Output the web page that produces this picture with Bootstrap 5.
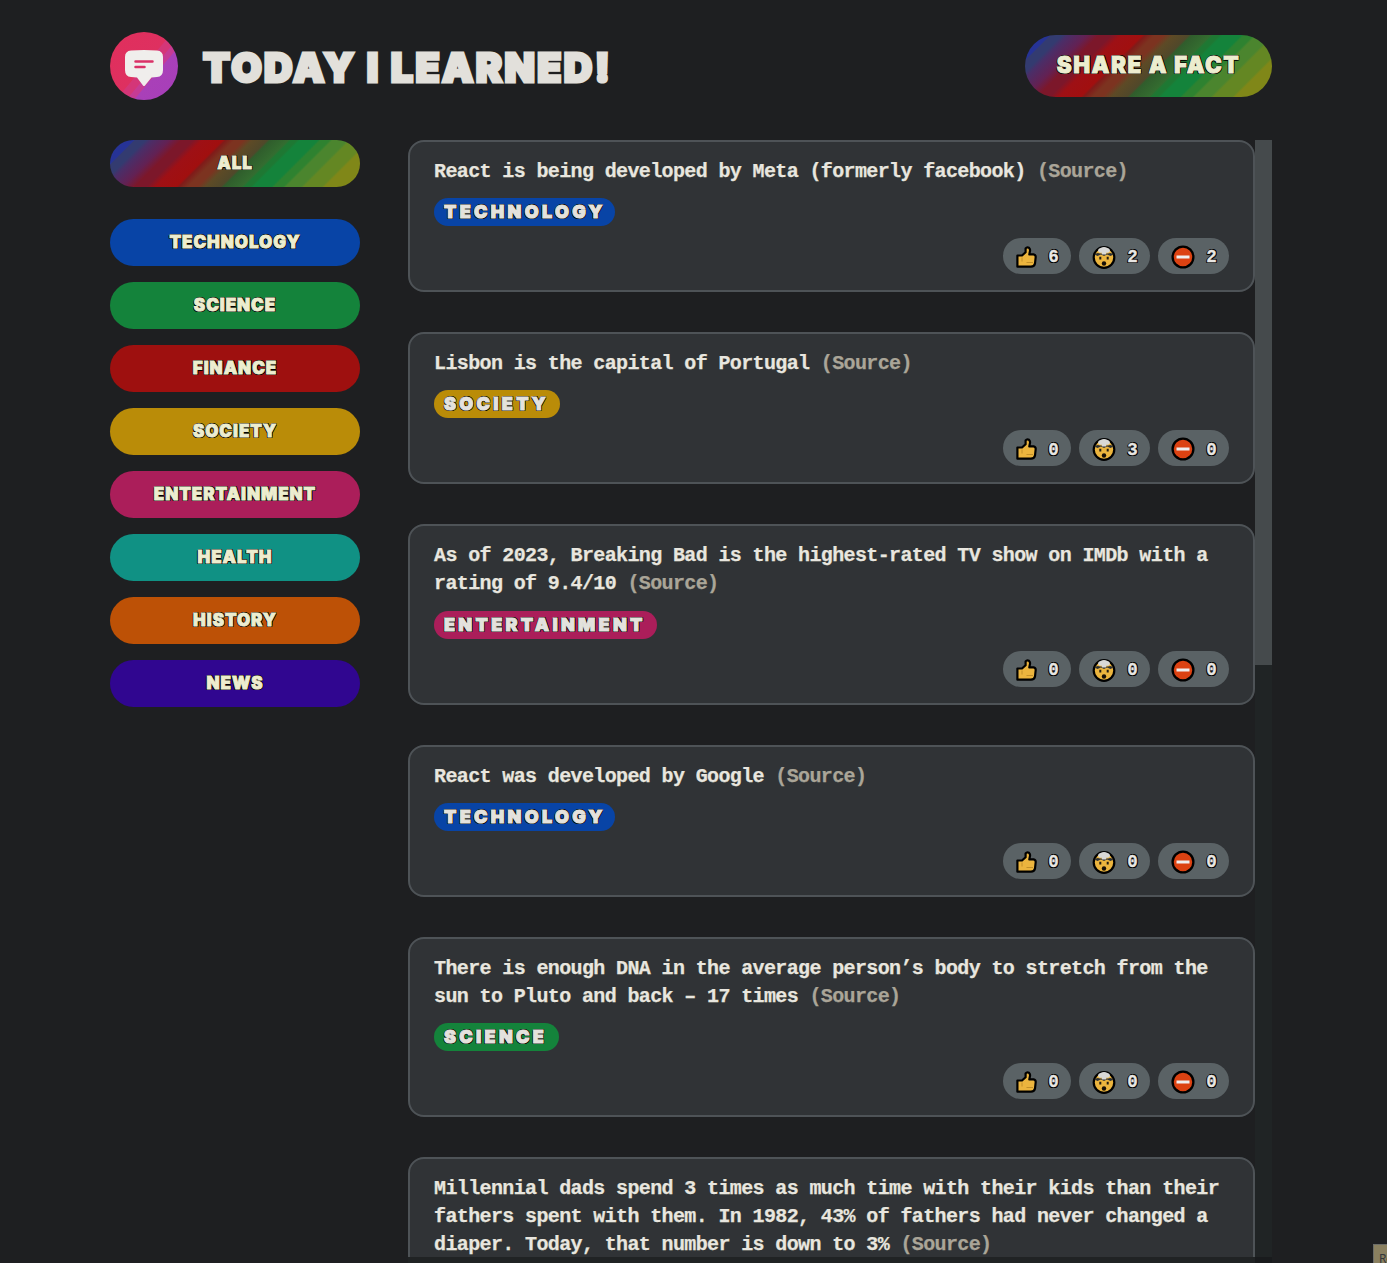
<!DOCTYPE html>
<html lang="en">
<head>
<meta charset="utf-8">
<meta name="viewport" content="width=device-width, initial-scale=1">
<title>Today I Learned</title>
<link href="https://cdn.jsdelivr.net/npm/bootstrap@5.3.0/dist/css/bootstrap.min.css" rel="stylesheet">
<style>
  body { background: #1e1f21; color: #e4e2dd; height: 1263px; overflow: hidden; font-family: "Liberation Mono", monospace; }
  .page { width: 1162px; margin-left: 110px; padding-top: 32px; height: 1263px; }
  .page-head { height: 68px; margin-bottom: 40px; }
  .chunky { font-family: Inter, "Liberation Sans", sans-serif; font-weight: 900; text-transform: uppercase; white-space: nowrap; }
  .title { font-size: 39.5px; line-height: 68px; height: 66px; margin: 2px 0 0 25px; color: #e2e0db; -webkit-text-stroke: 3px #e2e0db; letter-spacing: 2.35px; }
  .outlined { text-shadow: 1px 0 #000, -1px 0 #000, 0 1px #000, 0 -1px #000, 1px 1px #000, -1px 1px #000, 1px -1px #000; }
  .pill { border: 0; border-radius: 100px; color: #ededcf; display: flex; align-items: center; justify-content: center; -webkit-text-stroke: .9px #ededcf; }
  .rainbow { background: linear-gradient(135deg, #263396 0 8%, #333b70 8.5% 12%, #4a2e68 14%, #632153 20%, #7c172a 24% 28%, #9e1015 31%, #a10f0f 38%, #801b19 39%, #7c3320 42% 45%, #5d4a26 48%, #50482a 53%, #305d2c 54%, #346c30 60%, #1e7833 61% 63%, #14833b 64% 70%, #2e8230 71% 74%, #4b852e 75% 80%, #648723 81% 87%, #808718 88% 97%, #b98c0a 97.5%); }
  .share { width: 247px; height: 62px; font-size: 22.5px; padding-bottom: 2px; letter-spacing: 1.5px; margin-top: -1px; }
  .cats { width: 250px; flex: none; }
  .cat { width: 250px; height: 47px; font-size: 17px; padding-bottom: 0; letter-spacing: .95px; }
  .cat-all { margin-bottom: 16px; }
  .technology { background: #0844a6; } .science { background: #14833b; } .finance { background: #9e100f; }
  .society { background: #ba8c08; } .entertainment { background: #ab1e5a; } .health { background: #109184; }
  .history { background: #bd5106; } .news { background: #300690; }
  .cols { gap: 48px; height: 1123px; }
  .feed { width: 847px; height: 1117px; overflow: hidden; }
  .fact { flex: none; background: #303336; border: 2px solid #4e5357; border-radius: 16px; padding: 16px 24px; margin-bottom: 40.1px; }
  .fact-text { margin: 0 0 12px; font-size: 20px; line-height: 28.1px; font-weight: 700; letter-spacing: -.625px; color: #e8e6df; white-space: nowrap; -webkit-text-stroke: .25px; }
  .src { color: #aaa598; font-weight: 700; }
  .topic { height: 28px; border-radius: 20px; font-size: 18px; line-height: 28px; color: #e4e2dd; padding-left: 10px; margin-bottom: 12px; letter-spacing: 3.3px; -webkit-text-stroke: 1.1px #e4e2dd; }
  .topic.technology { width: 181px; } .topic.society { width: 126px; } .topic.entertainment { width: 223px; } .topic.science { width: 125px; }
  .vote { height: 36px; border: 0; border-radius: 18px; background: #5a6265; padding: 2px 12px 0 12.500px; color: #e8e6e3; font-size: 17.5px; line-height: 1; font-weight: 700; }
  .vote b { width: 11px; text-align: center; padding-top: 2px; -webkit-text-stroke: .3px; }
  .bars { width: 17px; height: 1117px; background: #202425; }
  .thumb { height: 525px; background: #454a4c; }
  .hbar { height: 6px; width: 864px; background: #202324; }
  .hcorner { width: 17px; height: 6px; background: #191b1d; }
  .hint { position: absolute; left: 1373px; top: 1244px; width: 80px; height: 30px; background: #8a8060; border: 1px solid #6b6c68; color: #34373b; font: 12px/27px "Noto Sans", sans-serif; padding-left: 5px; letter-spacing: -.5px; }
</style>
</head>
<body>
<svg width="0" height="0" class="position-absolute">
  <symbol id="like" viewBox="0 0 21 22">
    <path d="M1.4 9.5H6L9.6 6.2V2.4Q11 .6 13 1.8Q14.4 3 14 5L13.3 8.4H17.6Q19.8 8.8 19.7 11L19 17.5Q18.4 20.6 15 20.7H1.4Z" fill="#ecb53e" stroke="#000" stroke-width="2.2" stroke-linejoin="round"/>
    <path d="M6 15.5V11.5M10.5 16.5H17" stroke="#bd8b27" stroke-width=".9" fill="none"/>
  </symbol>
  <symbol id="blown" viewBox="0 0 24 24">
    <circle cx="12" cy="12.5" r="10.3" fill="#ecb53e" stroke="#000" stroke-width="2.2"/>
    <path d="M2.5 9.5Q5 7 8 8.5H16Q19 7 21.500 9.500L18.500 11L15 9.500L12 11L9 9.500L5.500 11Z" fill="#303335"/>
    <path d="M6.200 6.500Q5.500 3.500 8.500 3Q12 .8 15.500 3Q18.500 3.500 17.800 6.500Q16 8.500 14.500 7.500L14 9.500H10L9.500 7.500Q7.800 8.500 6.200 6.500Z" fill="#d9d9d7"/>
    <path d="M8.300 11.800V14.500M15.700 11.800V14.500" stroke="#231c12" stroke-width="2" />
    <ellipse cx="12" cy="18.500" rx="2.200" ry="2.300" fill="#160f08"/>
  </symbol>
  <symbol id="false" viewBox="0 0 24 24">
    <circle cx="12" cy="12" r="10.400" fill="#dc4212" stroke="#000" stroke-width="2.300"/>
    <path d="M5.500 12H18.500" stroke="#efeeee" stroke-width="3"/>
  </symbol>
</svg>
<div class="page">
  <header class="page-head d-flex justify-content-between align-items-center">
    <div class="d-flex">
      <svg width="68" height="68" viewBox="0 0 68 68">
        <defs><linearGradient id="lg" gradientUnits="userSpaceOnUse" x1="4" y1="8" x2="60" y2="55">
          <stop offset="0" stop-color="#e02f5d"/><stop offset=".54" stop-color="#de3060"/><stop offset=".55" stop-color="#d43678"/><stop offset=".65" stop-color="#d43678"/><stop offset=".66" stop-color="#c63b94"/><stop offset=".73" stop-color="#c63b94"/><stop offset=".74" stop-color="#a940b8"/><stop offset="1" stop-color="#a83fb9"/>
        </linearGradient></defs>
        <circle cx="34" cy="34" r="34" fill="url(#lg)"/>
        <path d="M21 18.500Q34 17.500 47 18.500Q53 19 53 25V38Q53 44.500 47 45L41.500 45.500L35 53.500Q34 54.500 33 53.500L27 45.500L21 45Q15 44.500 15 38V25Q15 19 21 18.500Z" fill="#f0eeec"/>
        <path d="M25.500 29.500H42.500M25.500 35H34.500" stroke="#da3167" stroke-width="2.500" stroke-linecap="round"/>
      </svg>
      <h1 class="title chunky">Today I Learned!</h1>
    </div>
    <button class="pill share rainbow chunky outlined">Share a fact</button>
  </header>
  <main class="cols d-flex">
    <aside class="cats d-flex flex-column gap-3">
      <button class="pill cat cat-all rainbow chunky outlined">All</button>
      <button class="pill cat technology chunky outlined">Technology</button>
      <button class="pill cat science chunky outlined">Science</button>
      <button class="pill cat finance chunky outlined">Finance</button>
      <button class="pill cat society chunky outlined">Society</button>
      <button class="pill cat entertainment chunky outlined">Entertainment</button>
      <button class="pill cat health chunky outlined">Health</button>
      <button class="pill cat history chunky outlined">History</button>
      <button class="pill cat news chunky outlined">News</button>
    </aside>
    <section>
      <div class="d-flex">
        <div class="feed d-flex flex-column" id="feed"></div>
        <div class="bars"><div class="thumb"></div></div>
      </div>
      <div class="hbar d-flex justify-content-end"><div class="hcorner"></div></div>
    </section>
  </main>
</div>
<div class="hint">Re</div>
<script>
  const facts = [
    ["React is being developed by Meta (formerly facebook)", "technology", 6, 2, 2],
    ["Lisbon is the capital of Portugal", "society", 0, 3, 0],
    ["As of 2023, Breaking Bad is the highest-rated TV show on IMDb with a<br>rating of 9.4/10", "entertainment", 0, 0, 0],
    ["React was developed by Google", "technology", 0, 0, 0],
    ["There is enough DNA in the average person’s body to stretch from the<br>sun to Pluto and back – 17 times", "science", 0, 0, 0],
    ["Millennial dads spend 3 times as much time with their kids than their<br>fathers spent with them. In 1982, 43% of fathers had never changed a<br>diaper. Today, that number is down to 3%"]
  ];
  const vote = (icon, w, h, n) => `<button class="vote outlined d-flex align-items-center justify-content-between" style="width:${w + 47}px"><svg width="${w}" height="${h}"><use href="#${icon}"/></svg><b>${n}</b></button>`;
  document.getElementById("feed").innerHTML = facts.map(([text, topic, a, b, c]) => `
    <article class="fact">
      <p class="fact-text">${text} <span class="src">(Source)</span></p>
      ${topic ? `<div class="topic chunky outlined ${topic}">${topic}</div>
      <div class="d-flex gap-2 justify-content-end">${vote("like", 21, 22, a)}${vote("blown", 24, 24, b)}${vote("false", 24, 24, c)}</div>` : ""}
    </article>`).join("");
</script>
<script src="https://cdn.jsdelivr.net/npm/bootstrap@5.3.0/dist/js/bootstrap.bundle.min.js"></script>
</body>
</html>
